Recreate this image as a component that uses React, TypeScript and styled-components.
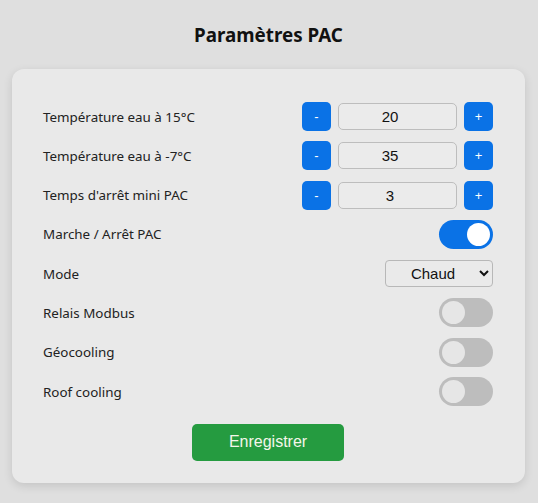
import React, { useState } from "react";
import styled, { createGlobalStyle } from "styled-components";

const Global = createGlobalStyle`
  html, body { margin: 0; padding: 0; background: #dfdfdf; }
  body { font-family: "Noto Sans", "Open Sans", sans-serif; }
`;

const Page = styled.div`
  padding: 22px 0 20px 12px;
  display: flex;
  flex-direction: column;
  align-items: flex-start;
`;

const Title = styled.h2`
  width: 513px;
  text-align: center;
  margin: 0 0 20px;
  font-size: 18.8px;
  line-height: 27px;
  font-weight: 700;
  color: #111;
`;

const Card = styled.div`
  width: 513px;
  box-sizing: border-box;
  background: #e9e9e9;
  border-radius: 12px;
  box-shadow: 0 3px 10px rgba(0, 0, 0, 0.12);
  padding: 33px 32px 22px 31px;
  display: flex;
  flex-direction: column;
`;

const Rows = styled.div`
  display: grid;
  grid-auto-rows: 29px;
  row-gap: 10.3px;
`;

const Row = styled.div`
  display: flex;
  align-items: center;
  justify-content: space-between;
`;

const Label = styled.span`
  font-size: 13.4px;
  color: #222;
`;

const Stepper = styled.div`
  display: flex;
  align-items: center;
  gap: 7px;
`;

const StepButton = styled.button`
  width: 29px;
  height: 29px;
  border: none;
  border-radius: 5px;
  background: #0a72e6;
  color: #fff;
  font-family: "Liberation Sans", Arial, sans-serif;
  font-size: 13px;
  padding: 0;
  cursor: pointer;
`;

const NumberInput = styled.input`
  width: 119px;
  height: 27px;
  box-sizing: border-box;
  border: 1px solid #bdbdbd;
  border-radius: 5px;
  background: #ebebeb;
  text-align: center;
  font-family: "Liberation Sans", Arial, sans-serif;
  font-size: 15px;
  color: #111;
  outline: none;
`;

const Track = styled.button<{ $on: boolean }>`
  width: 54px;
  height: 29px;
  border: none;
  border-radius: 15px;
  background: ${(p) => (p.$on ? "#0a72e6" : "#bdbdbd")};
  display: flex;
  align-items: center;
  justify-content: ${(p) => (p.$on ? "flex-end" : "flex-start")};
  padding: 0 3px;
  cursor: pointer;
`;

const Knob = styled.span<{ $on: boolean }>`
  width: 23px;
  height: 23px;
  border-radius: 50%;
  background: ${(p) => (p.$on ? "#ffffff" : "#e6e6e6")};
`;

const Select = styled.select`
  width: 108px;
  height: 27px;
  box-sizing: border-box;
  border: 1px solid #b8b8b8;
  border-radius: 4px;
  background: #eaeaea;
  font-family: "Liberation Sans", Arial, sans-serif;
  font-size: 15px;
  color: #111;
  text-align: center;
  text-align-last: center;
`;

const Footer = styled.div`
  display: flex;
  justify-content: center;
  margin-top: 17.5px;
`;

const SaveButton = styled.button`
  width: 152px;
  height: 37px;
  border: none;
  border-radius: 5px;
  background: #259b40;
  color: #f4f6ea;
  font-family: "Liberation Sans", Arial, sans-serif;
  font-size: 16px;
  cursor: pointer;
`;

function StepRow({ label, value }: { label: string; value: number }) {
  const [v, setV] = useState(value);
  return (
    <Row>
      <Label>{label}</Label>
      <Stepper>
        <StepButton onClick={() => setV(v - 1)}>-</StepButton>
        <NumberInput type="number" value={v} onChange={(e) => setV(Number(e.target.value))} />
        <StepButton onClick={() => setV(v + 1)}>+</StepButton>
      </Stepper>
    </Row>
  );
}

function ToggleRow({ label, on }: { label: string; on: boolean }) {
  const [v, setV] = useState(on);
  return (
    <Row>
      <Label>{label}</Label>
      <Track $on={v} onClick={() => setV(!v)}>
        <Knob $on={v} />
      </Track>
    </Row>
  );
}

export default function App() {
  return (
    <>
      <Global />
      <Page>
        <Title>Paramètres PAC</Title>
        <Card>
          <Rows>
            <StepRow label="Température eau à 15°C" value={20} />
            <StepRow label="Température eau à -7°C" value={35} />
            <StepRow label="Temps d'arrêt mini PAC" value={3} />
            <ToggleRow label="Marche / Arrêt PAC" on={true} />
            <Row>
              <Label>Mode</Label>
              <Select defaultValue="chaud">
                <option value="chaud">Chaud</option>
                <option value="froid">Froid</option>
              </Select>
            </Row>
            <ToggleRow label="Relais Modbus" on={false} />
            <ToggleRow label="Géocooling" on={false} />
            <ToggleRow label="Roof cooling" on={false} />
          </Rows>
          <Footer>
            <SaveButton>Enregistrer</SaveButton>
          </Footer>
        </Card>
      </Page>
    </>
  );
}
